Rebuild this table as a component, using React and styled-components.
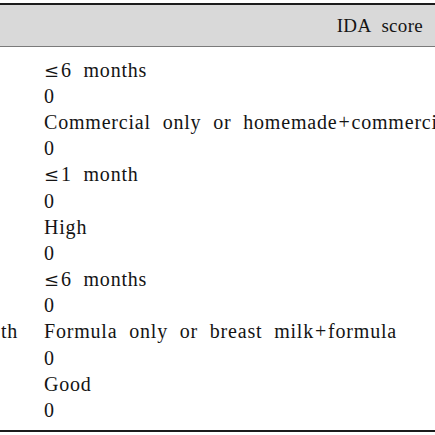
import styled, { createGlobalStyle } from 'styled-components';

const GlobalStyle = createGlobalStyle`
  html, body {
    margin: 0;
    padding: 0;
    background: #ffffff;
  }
  body {
    font-family: "Liberation Serif", "Times New Roman", serif;
    color: #141414;
  }
`;

const Frame = styled.div`
  width: 435px;
  height: 435px;
  overflow: hidden;
  padding-top: 3px;
  box-sizing: border-box;
`;

const Table = styled.div`
  border-top: 2px solid #1c1c1c;
  border-bottom: 2px solid #1c1c1c;
`;

const Header = styled.div`
  display: flex;
  justify-content: flex-end;
  align-items: center;
  height: 41px;
  padding-right: 12px;
  background: #d9d9d9;
  border-bottom: 1px solid #7a7a7a;
  font-size: 19px;
  letter-spacing: 0.3px;
  word-spacing: 6px;
`;

const Body = styled.div`
  padding: 10px 0 6px;
`;

const Row = styled.div`
  display: grid;
  grid-template-columns: 44px 1fr;
  height: 26.2px;
  align-items: center;
  font-size: 20px;
  white-space: nowrap;
`;

const Label = styled.div`
  padding-left: 1px;
  overflow: hidden;
  letter-spacing: 0.8px;
`;

const Value = styled.div`
  letter-spacing: 0.8px;
  word-spacing: 6px;
`;

const Sym = styled.span`
  font-family: "DejaVu Serif", serif;
  font-size: 18px;
  margin-right: 1px;
`;

const Plus = styled.span`
  margin: 0 1px;
`;

const rows = [
  ['', '≤6 months'],
  ['', '0'],
  ['', 'Commercial only or homemade+commercial'],
  ['', '0'],
  ['', '≤1 month'],
  ['', '0'],
  ['', 'High'],
  ['', '0'],
  ['', '≤6 months'],
  ['', '0'],
  ['th', 'Formula only or breast milk+formula'],
  ['', '0'],
  ['', 'Good'],
  ['', '0'],
];

function Cell({ text }) {
  if (text.startsWith('≤')) {
    return (
      <Value>
        <Sym>≤</Sym>
        {text.slice(1)}
      </Value>
    );
  }
  if (text.includes('+')) {
    const [a, b] = text.split('+');
    return (
      <Value>
        {a}
        <Plus>+</Plus>
        {b}
      </Value>
    );
  }
  return <Value>{text}</Value>;
}

export default function App() {
  return (
    <Frame>
      <GlobalStyle />
      <Table>
        <Header>IDA score</Header>
        <Body>
          {rows.map(([label, value], i) => (
            <Row key={i}>
              <Label>{label}</Label>
              <Cell text={value} />
            </Row>
          ))}
        </Body>
      </Table>
    </Frame>
  );
}
